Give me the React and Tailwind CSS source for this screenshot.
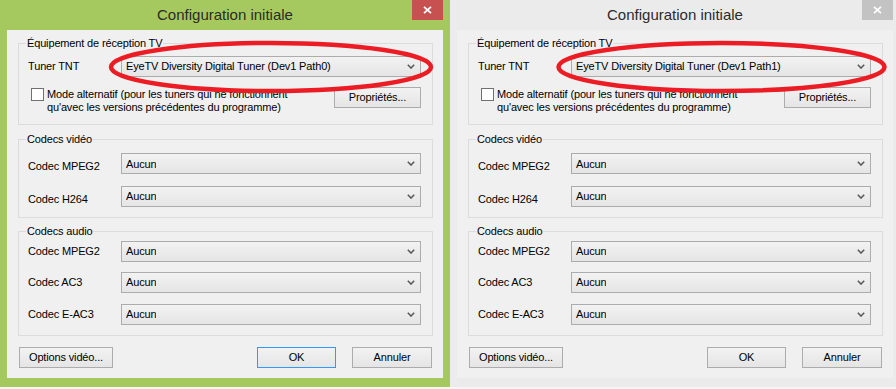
import React from "react";

const FONT = "font-['Liberation_Sans',Arial,sans-serif]";

function Chevron() {
  return (
    <svg width="8" height="5" viewBox="0 0 8 5" className="shrink-0">
      <path d="M0.8 0.8 L4 4 L7.2 0.8" fill="none" stroke="#5a5a5a" strokeWidth="1.6" />
    </svg>
  );
}

function Combo({ value }) {
  return (
    <div className="w-[300px] h-[21px] flex items-center justify-between pl-[4px] pr-[5px] border border-[#acacac] bg-gradient-to-b from-[#f2f2f2] to-[#e5e5e5] text-black">
      <span className="truncate">{value}</span>
      <Chevron />
    </div>
  );
}

function Button({ children, width, focused }) {
  return (
    <div
      className={`h-[21px] flex items-center justify-center border bg-gradient-to-b from-[#f2f2f2] to-[#e5e5e5] text-black ${
        focused ? "border-[#3399ff]" : "border-[#acacac]"
      } ${width}`}
    >
      {children}
    </div>
  );
}

function Row({ label, value, labelPad, className }) {
  return (
    <div className={`flex items-center ${className || ""}`}>
      <span className={`w-[102px] pl-[9px] ${labelPad || ""}`}>{label}</span>
      <Combo value={value} />
    </div>
  );
}

function Group({ title, children, className }) {
  return (
    <fieldset className={`border border-[#dcdcdc] ${className}`}>
      <legend className="ml-[7px] px-[1px] leading-[13px]">{title}</legend>
      {children}
    </fieldset>
  );
}

function Window({ active, tuner }) {
  return (
    <div
      className={`w-[450px] h-[387px] shrink-0 flex flex-col px-[7px] ${
        active ? "bg-[#a6c95f]" : "bg-[#ebebeb]"
      }`}
    >
      {/* Title bar */}
      <div className="relative h-[30px] flex items-center justify-center">
        <span className="text-[15px] text-[#2b2b2b]">Configuration initiale</span>
        <div
          className={`absolute right-0 top-0 w-[31px] h-[20px] flex items-center justify-center ${
            active ? "bg-[#c75050]" : "bg-[#c3c3c3]"
          }`}
        >
          <svg width="9" height="8" viewBox="0 0 9 8">
            <path d="M1 0.8 L8 7.2 M8 0.8 L1 7.2" stroke="#fff" strokeWidth="1.8" />
          </svg>
        </div>
      </div>

      {/* Client area */}
      <div className="h-[348px] bg-[#f0f0f0] pl-[11px] pr-[10px] pt-[7px] text-[11px] tracking-[-0.15px] text-black">
        {/* Tuner */}
        <Group title="Équipement de réception TV" className="pt-[6px] pb-[16px]">
          <div className="flex items-center">
            <span className="w-[102px] pl-[9px]">Tuner TNT</span>
            <Combo value={tuner} />
          </div>
          <div className="mt-[10px] h-[21px] flex items-start">
            <div className="ml-[12px] mt-[1px] w-[13px] h-[13px] border border-[#707070] bg-white shrink-0" />
            <div className="ml-[3px] w-[270px] leading-[13px] pt-[1px]">
              Mode alternatif (pour les tuners qui ne fonctionnent qu'avec les versions précédentes du programme)
            </div>
            <Button width="w-[87px] ml-auto mr-[11px]">Propriétés...</Button>
          </div>
        </Group>

        {/* Video */}
        <Group title="Codecs vidéo" className="mt-[8px] pt-[7px] pb-[10px]">
          <div className="flex flex-col gap-[11px]">
            <Row label="Codec MPEG2" value="Aucun" labelPad="pt-[5px]" />
            <Row label="Codec H264" value="Aucun" labelPad="pt-[5px]" />
          </div>
        </Group>

        {/* Audio */}
        <Group title="Codecs audio" className="mt-[7px] pt-[3px] pb-[10px]">
          <div className="flex flex-col gap-[10px]">
            <Row label="Codec MPEG2" value="Aucun" />
            <Row label="Codec AC3" value="Aucun" />
            <Row label="Codec E-AC3" value="Aucun" className="mt-[1px]" />
          </div>
        </Group>

        {/* Buttons */}
        <div className="mt-[11px] flex items-center pl-[1px] pr-[1px]">
          <Button width="w-[94px]">Options vidéo...</Button>
          <Button width="w-[79px] ml-auto" focused={active}>
            OK
          </Button>
          <Button width="w-[80px] ml-[16px]">Annuler</Button>
        </div>
      </div>
    </div>
  );
}

export default function App() {
  return (
    <div className={`relative w-[896px] h-[389px] overflow-hidden bg-[#f6f6f6] flex ${FONT}`}>
      <Window active tuner="EyeTV Diversity Digital Tuner (Dev1 Path0)" />
      <Window tuner="EyeTV Diversity Digital Tuner (Dev1 Path1)" />

      {/* Red annotation marks */}
      <svg className="absolute inset-0 pointer-events-none" width="896" height="389" viewBox="0 0 896 389">
        <ellipse cx="271" cy="67" rx="160" ry="24" fill="none" stroke="#ec1c24" strokeWidth="4.5" />
        <ellipse cx="721.5" cy="67" rx="163" ry="24" fill="none" stroke="#ec1c24" strokeWidth="4.5" />
      </svg>
    </div>
  );
}
